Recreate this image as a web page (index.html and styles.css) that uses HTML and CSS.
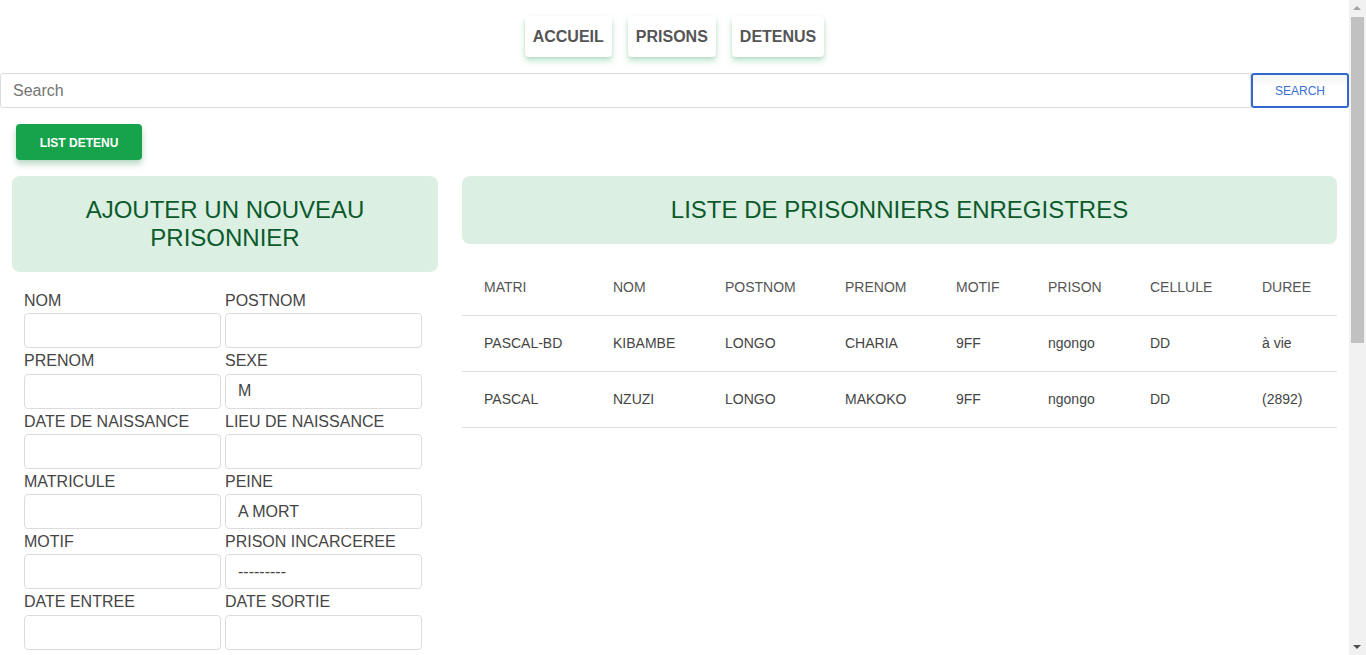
FILE: index.html
```html
<!DOCTYPE html>
<html lang="fr">
<head>
<meta charset="utf-8">
<title>Prisonniers</title>
<link rel="stylesheet" href="styles.css">
</head>
<body>
<div class="page">
  <nav class="topnav">
    <a class="navbtn" href="#">ACCUEIL</a>
    <a class="navbtn" href="#">PRISONS</a>
    <a class="navbtn" href="#">DETENUS</a>
  </nav>

  <form class="searchbar">
    <input class="search-input" type="text" placeholder="Search">
    <button class="search-btn" type="button">SEARCH</button>
  </form>

  <div class="actions">
    <button class="list-btn" type="button">LIST DETENU</button>
  </div>

  <main class="layout">
    <section class="leftcol">
      <div class="card-title tall">
        <h2>AJOUTER UN NOUVEAU<br>PRISONNIER</h2>
      </div>
      <form class="detenu-form">
        <div class="field"><label>NOM</label><input type="text"></div>
        <div class="field"><label>POSTNOM</label><input type="text"></div>
        <div class="field"><label>PRENOM</label><input type="text"></div>
        <div class="field"><label>SEXE</label><input type="text" value="M"></div>
        <div class="field"><label>DATE DE NAISSANCE</label><input type="text"></div>
        <div class="field"><label>LIEU DE NAISSANCE</label><input type="text"></div>
        <div class="field"><label>MATRICULE</label><input type="text"></div>
        <div class="field"><label>PEINE</label><input type="text" value="A MORT"></div>
        <div class="field"><label>MOTIF</label><input type="text"></div>
        <div class="field"><label>PRISON INCARCEREE</label><input type="text" value="---------"></div>
        <div class="field"><label>DATE ENTREE</label><input type="text"></div>
        <div class="field"><label>DATE SORTIE</label><input type="text"></div>
      </form>
    </section>

    <section class="rightcol">
      <div class="card-title">
        <h2>LISTE DE PRISONNIERS ENREGISTRES</h2>
      </div>
      <table class="ptable">
        <colgroup>
          <col class="c1"><col class="c2"><col class="c3"><col class="c4">
          <col class="c5"><col class="c6"><col class="c7"><col class="c8">
        </colgroup>
        <thead>
          <tr><th>MATRI</th><th>NOM</th><th>POSTNOM</th><th>PRENOM</th><th>MOTIF</th><th>PRISON</th><th>CELLULE</th><th>DUREE</th></tr>
        </thead>
        <tbody>
          <tr><td>PASCAL-BD</td><td>KIBAMBE</td><td>LONGO</td><td>CHARIA</td><td>9FF</td><td>ngongo</td><td>DD</td><td>à vie</td></tr>
          <tr><td>PASCAL</td><td>NZUZI</td><td>LONGO</td><td>MAKOKO</td><td>9FF</td><td>ngongo</td><td>DD</td><td>(2892)</td></tr>
        </tbody>
      </table>
    </section>
  </main>
</div>

<div class="scrollbar" aria-hidden="true">
  <div class="sb-arrow up"></div>
  <div class="sb-track"><div class="sb-thumb"></div></div>
  <div class="sb-arrow down"></div>
</div>
</body>
</html>
```

FILE: styles.css
```css
* { box-sizing: border-box; }

html, body {
  margin: 0;
  padding: 0;
  background: #fff;
  font-family: "Liberation Sans", Arial, sans-serif;
  color: #444;
}

.page {
  width: 1349px;
  height: 655px;
  overflow: hidden;
}

.topnav {
  display: flex;
  justify-content: center;
  gap: 16px;
  padding-top: 16px;
  height: 73px;
}

.navbtn {
  display: flex;
  align-items: center;
  height: 41px;
  padding: 0 8px;
  background: #fff;
  border-radius: 4px;
  text-decoration: none;
  color: #555;
  font-weight: bold;
  font-size: 16px;
  box-shadow: 0 4px 6px rgba(30, 170, 90, 0.28), 0 1px 3px rgba(0,0,0,0.08);
}

.searchbar {
  display: flex;
  margin: 0;
  height: 35px;
}

.search-input {
  flex: 1;
  height: 35px;
  border: 1px solid #dcdcdc;
  border-radius: 3px 0 0 3px;
  padding: 0 12px;
  font-family: inherit;
  font-size: 16px;
  color: #444;
  outline: none;
}

.search-input::placeholder { color: #757575; }

.search-btn {
  width: 98px;
  height: 35px;
  border: 2px solid #3568cf;
  border-radius: 3px;
  background: linear-gradient(#f4f4f4, #fff 40%);
  color: #3a6fd3;
  font-family: inherit;
  font-size: 12px;
  padding: 0;
}

.actions {
  padding: 16px 16px;
}

.list-btn {
  height: 36px;
  width: 126px;
  padding: 1px 0 0;
  background: #16a34b;
  border: none;
  border-radius: 4px;
  color: #fff;
  font-family: "Liberation Sans", Arial, sans-serif;
  font-weight: bold;
  font-size: 12px;
  box-shadow: 0 4px 6px rgba(20, 120, 60, 0.3);
}

.layout {
  display: grid;
  grid-template-columns: 426px 1fr;
  gap: 24px;
  padding: 0 12px;
  align-items: start;
}

.card-title {
  background: #dbefe2;
  border-radius: 8px;
  height: 68px;
  display: flex;
  align-items: center;
  justify-content: center;
}

.card-title.tall { height: 96px; }

.card-title h2 {
  margin: 0;
  font-weight: normal;
  font-size: 24px;
  line-height: 28px;
  color: #0b5a2c;
  text-align: center;
}

.detenu-form {
  display: grid;
  grid-template-columns: 197px 197px;
  column-gap: 4px;
  padding: 16px 12px 0;
}

.field {
  display: flex;
  flex-direction: column;
}

.field label {
  font-size: 16px;
  line-height: 25px;
  height: 25.25px;
  color: #454545;
}

.field input {
  height: 35px;
  border: 1px solid #dcdcdc;
  border-radius: 4px;
  padding: 0 12px;
  font-family: inherit;
  font-size: 16px;
  color: #444;
  outline: none;
}

.ptable {
  width: 100%;
  margin-top: 15px;
  border-collapse: collapse;
  table-layout: fixed;
  font-size: 14px;
}

.c1 { width: 129px; }
.c2 { width: 112px; }
.c3 { width: 120px; }
.c4 { width: 111px; }
.c5 { width: 92px; }
.c6 { width: 102px; }
.c7 { width: 112px; }
.c8 { width: auto; }

.ptable th,
.ptable td {
  text-align: left;
  padding: 0 0 0 22px;
  height: 56px;
  border-bottom: 1px solid #dedede;
  white-space: nowrap;
}

.ptable th {
  font-weight: normal;
  color: #555;
}

.ptable td { color: #444; }

/* browser scrollbar as shown in the capture */
.scrollbar {
  position: fixed;
  top: 0;
  right: 0;
  width: 17px;
  height: 100%;
  background: #f1f1f1;
  display: flex;
  flex-direction: column;
}

.sb-arrow {
  height: 17px;
  position: relative;
}

.sb-arrow::after {
  content: "";
  position: absolute;
  left: 4px;
  width: 0;
  height: 0;
  border-left: 4px solid transparent;
  border-right: 4px solid transparent;
}

.sb-arrow.up::after {
  top: 6px;
  border-bottom: 4px solid #a3a3a3;
}

.sb-arrow.down::after {
  top: 7px;
  border-top: 4px solid #505050;
}

.sb-track {
  flex: 1;
  padding: 0 2px;
}

.sb-thumb {
  height: 326px;
  background: #c1c1c1;
}
```
